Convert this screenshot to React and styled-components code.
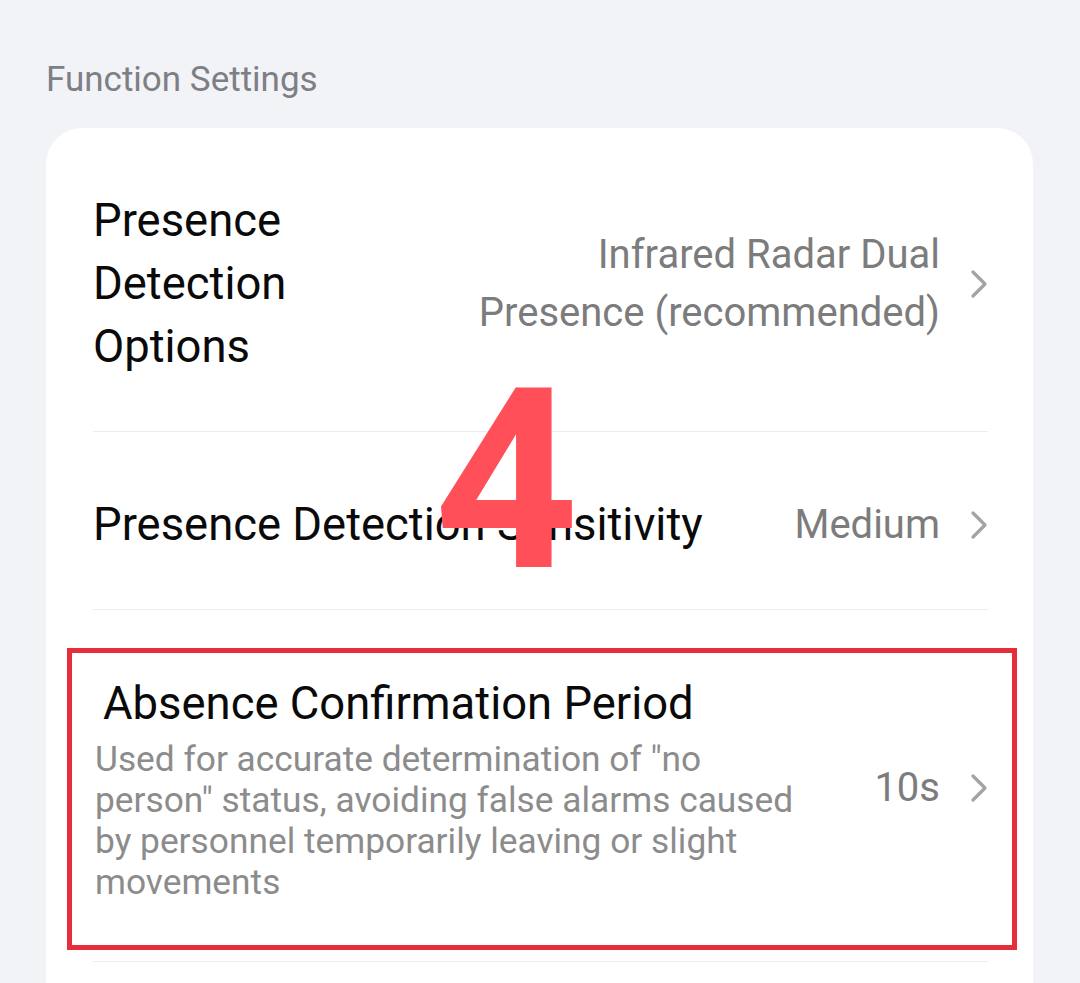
import React from 'react';
import styled, { createGlobalStyle } from 'styled-components';

const GlobalStyle = createGlobalStyle`
  html, body {
    margin: 0;
    padding: 0;
    background: #f2f3f7;
    font-family: Roboto, "Noto Sans", "Liberation Sans", sans-serif;
  }
`

const Page = styled.div`
  position: relative;
  height: 983px;
  padding: 0 47px 0 46px;
  overflow: hidden;
`

const SectionTitle = styled.div`
  padding-top: 60px;
  margin: 0 0 28px 0;
  height: 40px;
  line-height: 40px;
  font-size: 35px;
  color: #7e7e85;
`

const Card = styled.div`
  background: #fff;
  border-radius: 36px;
  padding: 0 45px 60px 47px;
`

const Row = styled.div`
  display: flex;
  align-items: center;
  gap: 64px;
  padding: ${props => props.pad || '61px 0 53px'};
  border-bottom: 1.5px solid #ededed;
`

const Main = styled.div`
  flex: 1;
  min-width: 0;
`

const Title = styled.div`
  font-size: 45.4px;
  line-height: 63px;
  color: #0a0a0a;
  padding-left: ${props => props.indent || 0}px;
`

const Desc = styled.div`
  margin-top: 4px;
  padding-left: 2px;
  font-size: 35.3px;
  line-height: 41px;
  color: #8c8c8c;
`

const Side = styled.div`
  display: flex;
  align-items: center;
  gap: 30px;
  flex-shrink: 0;
`

const Value = styled.div`
  max-width: 470px;
  text-align: right;
  font-size: 40px;
  line-height: 58px;
  color: #7c7c7c;
`

const Highlight = styled.div`
  position: absolute;
  left: 67px;
  top: 648px;
  width: 940px;
  height: 292px;
  border: 5px solid #e52e3a;
  pointer-events: none;
`

const StepNumber = styled.div`
  position: absolute;
  left: 434px;
  top: 355px;
  font-size: 252px;
  line-height: 1;
  font-weight: 700;
  color: #ff505a;
  pointer-events: none;
`

const Chevron = () => (
  <svg width="18" height="30" viewBox="0 0 18 30">
    <polyline points="3,3 15,15 3,27" fill="none" stroke="#a3a3a3"
      strokeWidth="3.2" strokeLinecap="round" strokeLinejoin="round" />
  </svg>
)

const settings = [
  {
    title: 'Presence Detection Options',
    value: 'Infrared Radar Dual Presence (recommended)',
  },
  {
    title: 'Presence Detection Sensitivity',
    value: 'Medium',
  },
  {
    title: 'Absence Confirmation Period',
    desc: 'Used for accurate determination of "no person" status, avoiding false alarms caused by personnel temporarily leaving or slight movements',
    value: '10s',
    indent: 10,
    pad: '62px 0 58px',
  },
]

const App = () => {
  return (
    <>
      <GlobalStyle />
      <Page>
        <SectionTitle>Function Settings</SectionTitle>
        <Card>
          {settings.map((item, i) => (
            <Row key={i} pad={item.pad}>
              <Main>
                <Title indent={item.indent}>{item.title}</Title>
                {item.desc && <Desc>{item.desc}</Desc>}
              </Main>
              <Side>
                <Value>{item.value}</Value>
                <Chevron />
              </Side>
            </Row>
          ))}
        </Card>
        <Highlight />
        <StepNumber>4</StepNumber>
      </Page>
    </>
  );
};

export default App;
